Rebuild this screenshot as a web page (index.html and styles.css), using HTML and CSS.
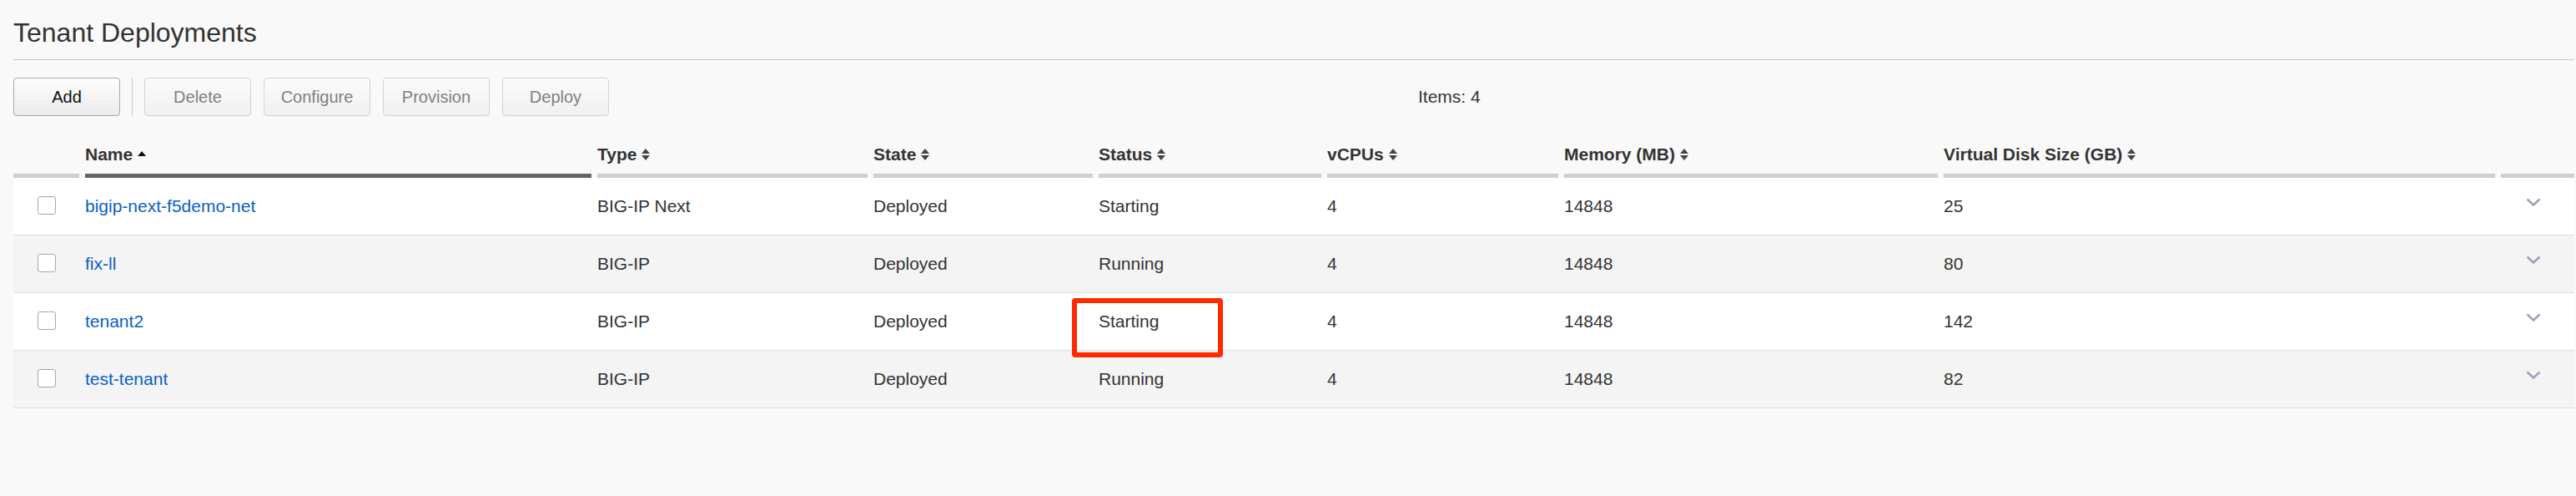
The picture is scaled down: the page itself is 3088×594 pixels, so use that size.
FILE: index.html
```html
<!DOCTYPE html>
<html lang="en">
<head>
    <meta charset="UTF-8">
    <meta name="viewport" content="width=device-width, initial-scale=1.0">
    <title>Tenant Deployments</title>
    <link rel="stylesheet" href="styles.css">
</head>
<body>

<div class="page-title">
    <h1>Tenant Deployments</h1>
</div>

<div class="toolbar">
    <button class="btn">Add</button>
    <span class="sep"></span>
    <button class="btn" disabled>Delete</button>
    <button class="btn" disabled>Configure</button>
    <button class="btn" disabled>Provision</button>
    <button class="btn" disabled>Deploy</button>
    <span class="items">Items: 4</span>
</div>

<div class="grid">
    <div class="grid-head">
        <div class="th"></div>
        <div class="th sorted">Name
            <svg class="sort" width="10" height="16" viewBox="0 0 10 16"><polygon points="0,10 5,4 10,10" fill="#111"/></svg>
        </div>
        <div class="th">Type
            <svg class="sort" width="10" height="16" viewBox="0 0 10 16"><polygon points="0,7 5,1 10,7" fill="#444"/><polygon points="0,9 5,15 10,9" fill="#444"/></svg>
        </div>
        <div class="th">State
            <svg class="sort" width="10" height="16" viewBox="0 0 10 16"><polygon points="0,7 5,1 10,7" fill="#444"/><polygon points="0,9 5,15 10,9" fill="#444"/></svg>
        </div>
        <div class="th">Status
            <svg class="sort" width="10" height="16" viewBox="0 0 10 16"><polygon points="0,7 5,1 10,7" fill="#444"/><polygon points="0,9 5,15 10,9" fill="#444"/></svg>
        </div>
        <div class="th">vCPUs
            <svg class="sort" width="10" height="16" viewBox="0 0 10 16"><polygon points="0,7 5,1 10,7" fill="#444"/><polygon points="0,9 5,15 10,9" fill="#444"/></svg>
        </div>
        <div class="th">Memory (MB)
            <svg class="sort" width="10" height="16" viewBox="0 0 10 16"><polygon points="0,7 5,1 10,7" fill="#444"/><polygon points="0,9 5,15 10,9" fill="#444"/></svg>
        </div>
        <div class="th">Virtual Disk Size (GB)
            <svg class="sort" width="10" height="16" viewBox="0 0 10 16"><polygon points="0,7 5,1 10,7" fill="#444"/><polygon points="0,9 5,15 10,9" fill="#444"/></svg>
        </div>
        <div class="th"></div>
    </div>

    <div class="grid-row">
        <div class="td check"><span class="checkbox"></span></div>
        <div class="td"><a href="#">bigip-next-f5demo-net</a></div>
        <div class="td">BIG-IP Next</div>
        <div class="td">Deployed</div>
        <div class="td">Starting</div>
        <div class="td">4</div>
        <div class="td">14848</div>
        <div class="td">25</div>
        <div class="td expand"><svg width="18" height="11" viewBox="0 0 18 11"><polyline points="1.5,1.5 9,8.5 16.5,1.5" fill="none" stroke="#9ba3b5" stroke-width="2.6"/></svg></div>
    </div>

    <div class="grid-row">
        <div class="td check"><span class="checkbox"></span></div>
        <div class="td"><a href="#">fix-ll</a></div>
        <div class="td">BIG-IP</div>
        <div class="td">Deployed</div>
        <div class="td">Running</div>
        <div class="td">4</div>
        <div class="td">14848</div>
        <div class="td">80</div>
        <div class="td expand"><svg width="18" height="11" viewBox="0 0 18 11"><polyline points="1.5,1.5 9,8.5 16.5,1.5" fill="none" stroke="#9ba3b5" stroke-width="2.6"/></svg></div>
    </div>

    <div class="grid-row">
        <div class="td check"><span class="checkbox"></span></div>
        <div class="td"><a href="#">tenant2</a></div>
        <div class="td">BIG-IP</div>
        <div class="td">Deployed</div>
        <div class="td marked">Starting<span class="highlight"></span></div>
        <div class="td">4</div>
        <div class="td">14848</div>
        <div class="td">142</div>
        <div class="td expand"><svg width="18" height="11" viewBox="0 0 18 11"><polyline points="1.5,1.5 9,8.5 16.5,1.5" fill="none" stroke="#9ba3b5" stroke-width="2.6"/></svg></div>
    </div>

    <div class="grid-row">
        <div class="td check"><span class="checkbox"></span></div>
        <div class="td"><a href="#">test-tenant</a></div>
        <div class="td">BIG-IP</div>
        <div class="td">Deployed</div>
        <div class="td">Running</div>
        <div class="td">4</div>
        <div class="td">14848</div>
        <div class="td">82</div>
        <div class="td expand"><svg width="18" height="11" viewBox="0 0 18 11"><polyline points="1.5,1.5 9,8.5 16.5,1.5" fill="none" stroke="#9ba3b5" stroke-width="2.6"/></svg></div>
    </div>
</div>

</body>
</html>
```

FILE: styles.css
```css
body {
    margin: 0;
    padding: 0 2px 0 16px;
    background: #f9f9f9;
    font-family: "Liberation Sans", Arial, Helvetica, sans-serif;
    color: #333;
}
.page-title {
    padding: 20px 0 13px;
    border-bottom: 1px solid #c9c9c9;
}
h1 {
    margin: 0;
    font-size: 32px;
    line-height: 38px;
    font-weight: normal;
    color: #333;
}
.toolbar {
    display: flex;
    align-items: center;
    gap: 15px;
    margin-top: 21px;
}
.btn {
    width: 128px;
    height: 46px;
    border: 1px solid #a8a8a8;
    border-radius: 4px;
    background: linear-gradient(#fdfdfd, #ebebeb);
    font-family: inherit;
    font-size: 20px;
    color: #111;
}
.btn:disabled {
    border-color: #d2d2d2;
    background: linear-gradient(#fbfbfb, #f0f0f0);
    color: #808080;
}
.sep {
    width: 1px;
    height: 46px;
    margin: 0 -1px;
    background: #c8c8c8;
}
.items {
    margin-left: 955px;
    font-size: 21px;
    color: #333;
}
.grid {
    margin-top: 34px;
}
.grid-head,
.grid-row {
    display: grid;
    grid-template-columns: 79px 607px 324px 263px 267px 277px 448px 661px 88px;
    column-gap: 7px;
}
.th {
    display: flex;
    align-items: center;
    font-size: 21px;
    line-height: 24px;
    font-weight: bold;
    color: #333;
    padding-bottom: 11px;
    border-bottom: 5px solid #cfcfcf;
}
.th.sorted {
    border-bottom-color: #666;
}
.sort {
    margin-left: 6px;
}
.grid-row {
    height: 68px;
    background: #fff;
    border-bottom: 1px solid #dddddd;
}
.grid-row:nth-child(odd) {
    background: #f4f4f4;
}
.td {
    display: flex;
    align-items: center;
    font-size: 21px;
    line-height: 24px;
    color: #333;
}
.td a {
    color: #0a60c6;
    text-decoration: none;
}
.check {
    justify-content: center;
}
.checkbox {
    width: 20px;
    height: 20px;
    border: 1px solid #a6a6a6;
    border-radius: 3px;
    background: #fff;
    margin-top: -3px;
}
.expand {
    align-items: flex-start;
    padding: 24px 0 0 30px;
}
.marked {
    position: relative;
}
.highlight {
    position: absolute;
    left: -32px;
    top: 6px;
    width: 181px;
    height: 71px;
    box-sizing: border-box;
    border: 6px solid #ff2a00;
    border-radius: 4px;
}
```
